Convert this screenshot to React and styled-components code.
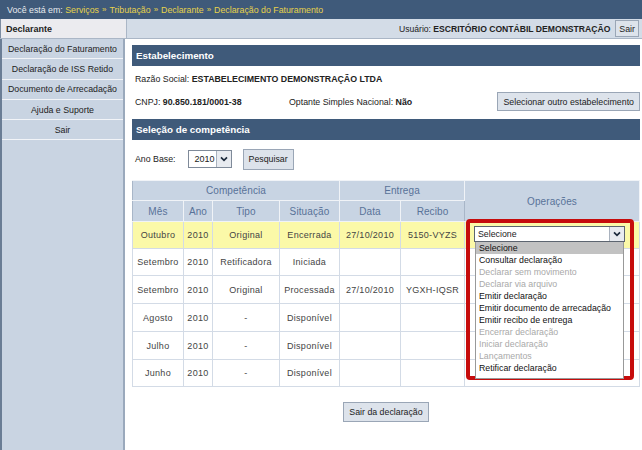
import React from 'react'
import styled, { createGlobalStyle } from 'styled-components'

const GlobalStyle = createGlobalStyle`
  html, body {
    margin: 0;
    padding: 0;
    background: #fff;
  }
  body {
    font-family: "Liberation Sans", Arial, sans-serif;
    font-size: 8.8px;
    color: #222;
  }
`

const Page = styled.div`
  width: 642px;
  height: 450px;
  display: flex;
  flex-direction: column;
  overflow: hidden;
`

const TopBar = styled.div`
  height: 19px;
  background: #3f5a7a;
  color: #e8eaee;
  display: flex;
  align-items: center;
  padding-left: 7px;
  font-size: 8.8px;
`

const Crumb = styled.span`
  color: #e7d24b;
`

const Sep = styled.span`
  color: #e7d24b;
  margin: 0 3px;
  font-size: 8px;
`

const UserBar = styled.div`
  height: 19px;
  display: flex;
  border-bottom: 1px solid #aab6c6;
`

const SideTitle = styled.div`
  width: 120px;
  background: #ebebef;
  font-weight: bold;
  font-size: 9px;
  display: flex;
  align-items: center;
  padding-left: 5px;
  border-right: 1px solid #aab6c6;
  border-left: 1px solid #7d8da2;
`

const UserInfo = styled.div`
  flex: 1;
  background: #d3dce7;
  display: flex;
  align-items: center;
  justify-content: flex-end;
  padding-right: 3px;
  gap: 5px;
  font-size: 8.6px;
`

const SmallButton = styled.button`
  font-family: inherit;
  font-size: 8.8px;
  color: #222;
  background: #dde3eb;
  border: 1px solid #9aa6b6;
  padding: 0 ${p => p.$px || 4}px;
  height: ${p => p.$h || 17}px;
  cursor: pointer;
`

const Body = styled.div`
  flex: 1;
  display: flex;
  min-height: 0;
`

const Sidebar = styled.div`
  width: 122px;
  background: #c9d4e2;
  border-left: 2px solid #6a7d95;
  border-right: 2px solid #9aa9bc;
  display: flex;
  flex-direction: column;
`

const MenuItem = styled.div`
  height: 19.3px;
  display: flex;
  align-items: center;
  justify-content: center;
  border-bottom: 1px solid #f2f4f8;
  color: #222;
  font-size: 8.8px;
  white-space: nowrap;
`

const Main = styled.div`
  flex: 1;
  padding: 6px 2px 0 7px;
  display: flex;
  flex-direction: column;
`

const SectionHeader = styled.div`
  height: 21px;
  background: #3f5a7a;
  color: #fff;
  font-weight: bold;
  font-size: 9.8px;
  display: flex;
  align-items: center;
  padding-left: 4px;
`

const InfoRow = styled.div`
  display: flex;
  align-items: center;
  height: ${p => p.$h}px;
  padding-left: 3px;
`

const Strong = styled.b`
  font-weight: bold;
`

const Field = styled.span`
  width: ${p => p.$w ? `${p.$w}px` : 'auto'};
  flex: ${p => p.$w ? 'none' : 1};
`

const Spacer = styled.div`
  height: ${p => p.$h}px;
`

const FilterRow = styled.div`
  display: flex;
  align-items: center;
  height: 38px;
  padding-left: 3px;
`

const Select = styled.div`
  width: 44px;
  height: 18px;
  border: 1px solid #7f8a99;
  display: flex;
  align-items: center;
  justify-content: space-between;
  padding-left: 6px;
  margin-left: 12px;
  margin-right: 11px;
  box-sizing: border-box;
  background: #fff;
  font-size: 9px;
`

const Arrow = styled.span`
  width: 14px;
  height: 100%;
  background: #e8ebf0;
  border-left: 1px solid #a9b2be;
  display: flex;
  align-items: center;
  justify-content: center;
`

const TableWrap = styled.div`
  position: relative;
  margin-top: 2px;
`

const Table = styled.table`
  width: 507px;
  border-collapse: collapse;
  table-layout: fixed;
  font-size: 9px;
  letter-spacing: 0.3px;
  color: #444;
`

const Th = styled.th`
  background: #c8d4e3;
  color: #587298;
  font-weight: normal;
  font-size: 10px;
  letter-spacing: 0.1px;
  border: 1px solid #f0f3f7;
  border-left-color: #a8b6c8;
  height: ${p => p.$h || 19}px;
  padding: 0;
`

const Td = styled.td`
  text-align: center;
  border: 1px solid #d3dbe6;
  height: ${p => p.$h || 26}px;
  padding: 0;
  background: ${p => p.$hl ? '#fbf9a8' : '#fff'};
`

const RedBox = styled.div`
  position: absolute;
  left: 334px;
  top: 39px;
  width: 168px;
  height: 161px;
  box-sizing: border-box;
  border: 4px solid #c60c0c;
  border-radius: 4px;
  padding: 3px 4px 0 4px;
`

const DropSelect = styled.div`
  height: 16px;
  border: 1px solid #5d6570;
  display: flex;
  align-items: center;
  justify-content: space-between;
  padding-left: 3px;
  background: #fff;
  font-size: 8.8px;
  box-sizing: border-box;
  margin-right: 1px;
`

const ListBox = styled.div`
  border: 1px solid #999;
  border-top: none;
  background: #fff;
  margin-left: 1px;
  margin-right: 2px;
  height: 137px;
  box-sizing: border-box;
`

const Option = styled.div`
  height: 12px;
  line-height: 12px;
  font-size: 8.8px;
  padding-left: 3px;
  color: ${p => p.$disabled ? '#a9a9a9' : '#111'};
  background: ${p => p.$selected ? '#c2c2c2' : 'transparent'};
  white-space: nowrap;
`

const Footer = styled.div`
  display: flex;
  justify-content: center;
  padding-top: 15px;
`

const Chevron = () => (
  <svg width="8" height="6" viewBox="0 0 9 7">
    <path d="M1 1.5 L4.5 5 L8 1.5" fill="none" stroke="#1c2a3c" strokeWidth="2" />
  </svg>
)

const menu = [
  'Declaração do Faturamento',
  'Declaração de ISS Retido',
  'Documento de Arrecadação',
  'Ajuda e Suporte',
  'Sair'
]

const rows = [
  { mes: 'Outubro', ano: '2010', tipo: 'Original', sit: 'Encerrada', data: '27/10/2010', recibo: '5150-VYZS', hl: true },
  { mes: 'Setembro', ano: '2010', tipo: 'Retificadora', sit: 'Iniciada', data: '', recibo: '' },
  { mes: 'Setembro', ano: '2010', tipo: 'Original', sit: 'Processada', data: '27/10/2010', recibo: 'YGXH-IQSR', h: 27 },
  { mes: 'Agosto', ano: '2010', tipo: '-', sit: 'Disponível', data: '', recibo: '', h: 27 },
  { mes: 'Julho', ano: '2010', tipo: '-', sit: 'Disponível', data: '', recibo: '', h: 27 },
  { mes: 'Junho', ano: '2010', tipo: '-', sit: 'Disponível', data: '', recibo: '', h: 26 }
]

const options = [
  { label: 'Selecione', selected: true },
  { label: 'Consultar declaração' },
  { label: 'Declarar sem movimento', disabled: true },
  { label: 'Declarar via arquivo', disabled: true },
  { label: 'Emitir declaração' },
  { label: 'Emitir documento de arrecadação' },
  { label: 'Emitir recibo de entrega' },
  { label: 'Encerrar declaração', disabled: true },
  { label: 'Iniciar declaração', disabled: true },
  { label: 'Lançamentos', disabled: true },
  { label: 'Retificar declaração' }
]

export default function App() {
  return (
    <Page>
      <GlobalStyle />
      <TopBar>
        Você está em:&nbsp;
        <Crumb>Serviços</Crumb><Sep>»</Sep>
        <Crumb>Tributação</Crumb><Sep>»</Sep>
        <Crumb>Declarante</Crumb><Sep>»</Sep>
        <Crumb>Declaração do Faturamento</Crumb>
      </TopBar>
      <UserBar>
        <SideTitle>Declarante</SideTitle>
        <UserInfo>
          <span>Usuário: <Strong>ESCRITÓRIO CONTÁBIL DEMONSTRAÇÃO</Strong></span>
          <SmallButton $px={3}>Sair</SmallButton>
        </UserInfo>
      </UserBar>
      <Body>
        <Sidebar>
          {menu.map(m => <MenuItem key={m}>{m}</MenuItem>)}
        </Sidebar>
        <Main>
          <SectionHeader>Estabelecimento</SectionHeader>
          <InfoRow $h={26}>
            Razão Social:&nbsp;<Strong>ESTABELECIMENTO DEMONSTRAÇÃO LTDA</Strong>
          </InfoRow>
          <InfoRow $h={19}>
            <Field $w={154}>CNPJ: <Strong>90.850.181/0001-38</Strong></Field>
            <Field>Optante Simples Nacional: <Strong>Não</Strong></Field>
            <SmallButton $h={19} $px={5}>Selecionar outro estabelecimento</SmallButton>
          </InfoRow>
          <Spacer $h={8} />
          <SectionHeader>Seleção de competência</SectionHeader>
          <FilterRow>
            Ano Base:
            <Select>2010<Arrow><Chevron /></Arrow></Select>
            <SmallButton $h={21} $px={5}>Pesquisar</SmallButton>
          </FilterRow>
          <TableWrap>
            <Table>
              <colgroup>
                <col style={{ width: 51 }} />
                <col style={{ width: 29 }} />
                <col style={{ width: 67 }} />
                <col style={{ width: 60 }} />
                <col style={{ width: 61 }} />
                <col style={{ width: 64 }} />
                <col style={{ width: 175 }} />
              </colgroup>
              <thead>
                <tr>
                  <Th colSpan={4}>Competência</Th>
                  <Th colSpan={2}>Entrega</Th>
                  <Th rowSpan={2}>Operações</Th>
                </tr>
                <tr>
                  <Th $h={20}>Mês</Th>
                  <Th $h={20}>Ano</Th>
                  <Th $h={20}>Tipo</Th>
                  <Th $h={20}>Situação</Th>
                  <Th $h={20}>Data</Th>
                  <Th $h={20}>Recibo</Th>
                </tr>
              </thead>
              <tbody>
                {rows.map((r, i) => (
                  <tr key={i}>
                    <Td $hl={r.hl} $h={r.h}>{r.mes}</Td>
                    <Td $hl={r.hl} $h={r.h}>{r.ano}</Td>
                    <Td $hl={r.hl} $h={r.h}>{r.tipo}</Td>
                    <Td $hl={r.hl} $h={r.h}>{r.sit}</Td>
                    <Td $hl={r.hl} $h={r.h}>{r.data}</Td>
                    <Td $hl={r.hl} $h={r.h}>{r.recibo}</Td>
                    <Td $hl={r.hl} $h={r.h}></Td>
                  </tr>
                ))}
              </tbody>
            </Table>
            <RedBox>
              <DropSelect>Selecione<Arrow><Chevron /></Arrow></DropSelect>
              <ListBox>
                {options.map(o => (
                  <Option key={o.label} $disabled={o.disabled} $selected={o.selected}>{o.label}</Option>
                ))}
              </ListBox>
            </RedBox>
          </TableWrap>
          <Footer>
            <SmallButton $h={20} $px={5}>Sair da declaração</SmallButton>
          </Footer>
        </Main>
      </Body>
    </Page>
  )
}
